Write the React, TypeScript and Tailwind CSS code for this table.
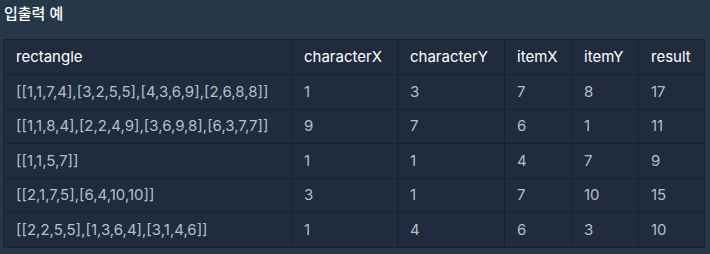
const rows = [
  ['[[1,1,7,4],[3,2,5,5],[4,3,6,9],[2,6,8,8]]', '1', '3', '7', '8', '17'],
  ['[[1,1,8,4],[2,2,4,9],[3,6,9,8],[6,3,7,7]]', '9', '7', '6', '1', '11'],
  ['[[1,1,5,7]]', '1', '1', '4', '7', '9'],
  ['[[2,1,7,5],[6,4,10,10]]', '3', '1', '7', '10', '15'],
  ['[[2,2,5,5],[1,3,6,4],[3,1,4,6]]', '1', '4', '6', '3', '10'],
]

const headers = ['rectangle', 'characterX', 'characterY', 'itemX', 'itemY', 'result']
const widths = ['w-[288px]', 'w-[106px]', 'w-[107px]', 'w-[67px]', 'w-[67px]', 'w-[66px]']

const App = () => {
  return (
    <div
      className="w-[710px] h-[254px] bg-[#263747] pt-[4px] pl-[4px]"
      style={{ fontFamily: 'Inter, "Noto Sans CJK KR", sans-serif' }}
    >
      <h5 className="text-[15px] font-medium text-white leading-[20px]">입출력 예</h5>
      <table className="mt-[15px] -ml-[1px] border-collapse bg-[#202b3d] text-[15px]">
        <thead>
          <tr>
            {headers.map((h, i) => (
              <th
                key={h}
                className={`${widths[i]} h-[35px] border border-[#172130] px-[12px] text-left font-normal text-white`}
              >
                {h}
              </th>
            ))}
          </tr>
        </thead>
        <tbody>
          {rows.map((r, ri) => (
            <tr key={ri}>
              {r.map((c, ci) => (
                <td
                  key={ci}
                  className="h-[34.6px] border border-[#172130] px-[12px] text-[#b2c0cc]"
                >
                  {c}
                </td>
              ))}
            </tr>
          ))}
        </tbody>
      </table>
    </div>
  )
}

export default App
